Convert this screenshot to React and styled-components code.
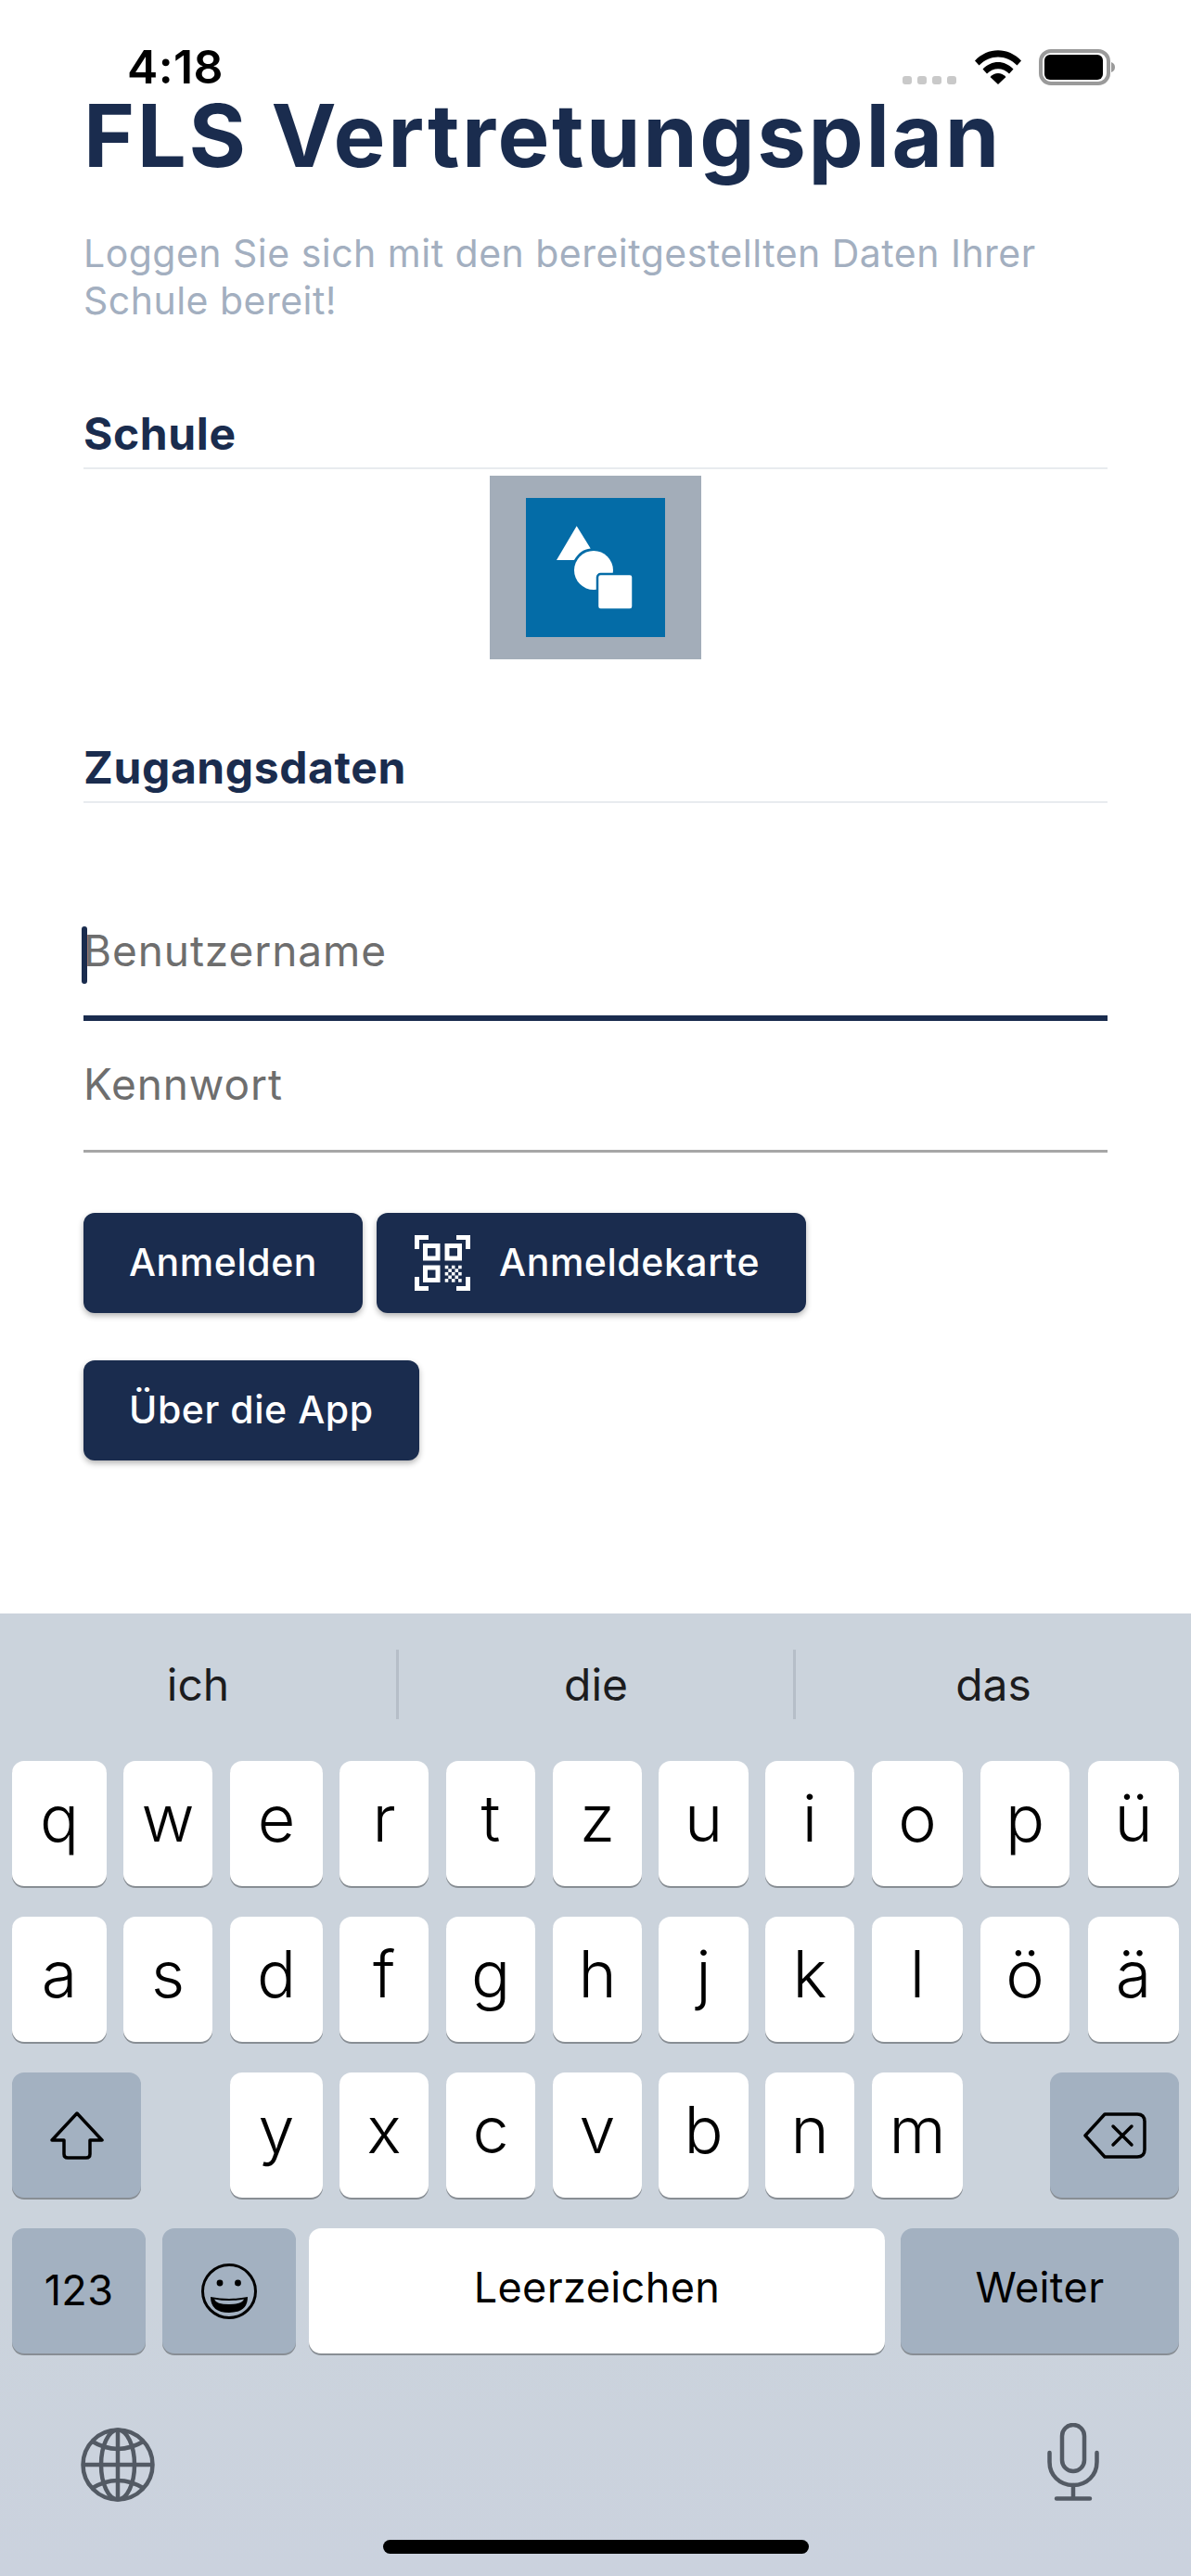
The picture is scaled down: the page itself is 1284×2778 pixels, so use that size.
import React from "react";
import styled, { createGlobalStyle } from "styled-components";

const Global = createGlobalStyle`
  html, body { margin: 0; padding: 0; background: #fff; }
  * { box-sizing: border-box; }
  #root { font-family: Inter, "Noto Sans", sans-serif; }
`;

const Phone = styled.div`
  width: 1284px;
  height: 2778px;
  display: flex;
  flex-direction: column;
  background: #fff;
  overflow: hidden;
`;

const StatusBar = styled.div`
  height: 96px;
  padding: 53px 82px 0 137px;
  display: flex;
  justify-content: space-between;
  align-items: flex-start;
`;
const Time = styled.div`
  font-size: 50px;
  line-height: 39px;
  font-weight: 600;
  color: #000;
  letter-spacing: 0.4px;
`;
const StatusIcons = styled.div`
  display: flex;
  align-items: flex-start;
`;
const SignalDots = styled.div`
  display: flex;
  gap: 6px;
  margin: 29px 20px 0 0;
`;
const Dot = styled.span`
  width: 10px;
  height: 9px;
  border-radius: 3px;
  background: #c9c9c9;
`;
const WifiSvg = styled.svg`
  width: 50px;
  height: 37px;
  margin: 1px 19px 0 0;
`;
const BatterySvg = styled.svg`
  width: 82px;
  height: 39px;
`;

const Content = styled.div`
  padding: 0 90px;
`;
const Title = styled.h1`
  margin: 0;
  font-size: 94px;
  line-height: 100px;
  font-weight: 700;
  color: #1a2c4e;
  letter-spacing: 2.6px;
  white-space: nowrap;
`;
const Subtitle = styled.p`
  margin: 52px 0 0;
  font-size: 41px;
  line-height: 51px;
  letter-spacing: 0.48px;
  color: #a3afc0;
`;
const SectionHead = styled.div`
  margin-top: ${(p) => p.$top}px;
  padding-bottom: 9px;
  border-bottom: 2px solid #e8ebef;
  font-size: 48px;
  line-height: 54px;
  font-weight: 700;
  letter-spacing: 0.6px;
  color: #1a2c4e;
`;
const LogoWrap = styled.div`
  width: 228px;
  height: 198px;
  margin: 7px auto 0;
  background: #a3adb9;
  display: flex;
  align-items: center;
  justify-content: center;
`;
const LogoSvg = styled.svg`
  width: 150px;
  height: 150px;
  display: block;
`;
const Field = styled.div`
  position: relative;
  margin-top: ${(p) => p.$top}px;
  height: ${(p) => p.$h}px;
  display: flex;
  align-items: flex-end;
  padding-bottom: ${(p) => p.$pad}px;
  border-bottom: ${(p) => (p.$focus ? "6px solid #1a2c4e" : "3px solid #a6a6a6")};
  font-size: 46px;
  line-height: 54px;
  letter-spacing: 0.9px;
  color: #6e6e6e;
`;
const Caret = styled.span`
  position: absolute;
  left: -2px;
  top: 41px;
  width: 6px;
  height: 62px;
  border-radius: 3px;
  background: #1a2c4e;
`;
const ButtonRow = styled.div`
  display: flex;
  gap: 15px;
  margin-top: ${(p) => p.$top}px;
`;
const Button = styled.div`
  height: 108px;
  padding: 0 49px 2px;
  display: flex;
  align-items: center;
  gap: 31px;
  border-radius: 12px;
  background: #1a2c4e;
  color: #fff;
  font-size: 41px;
  font-weight: 500;
  letter-spacing: 0.55px;
  box-shadow: 0 3px 6px rgba(0, 0, 0, 0.3);
  white-space: nowrap;
`;
const IconButton = styled(Button)`
  padding: 0 50px 2px 41px;
`;
const QrSvg = styled.svg`
  width: 60px;
  height: 60px;
  flex: none;
  margin-top: 2px;
`;

const Keyboard = styled.div`
  margin-top: auto;
  height: 1038px;
  background: linear-gradient(180deg, #cbd3dc 0%, #cbd3dc 70%, #cbd2de 100%);
  display: flex;
  flex-direction: column;
`;
const Suggestions = styled.div`
  height: 159px;
  padding-top: 39px;
  display: grid;
  grid-template-columns: 427px 428px 429px;
`;
const Suggestion = styled.div`
  height: 75px;
  display: flex;
  align-items: center;
  justify-content: center;
  font-size: 48px;
  color: #1c1c1e;
  border-left: ${(p) => (p.$first ? "none" : "3px solid #b6bec8")};
`;
const KeyRow = styled.div`
  display: flex;
  height: 135px;
  margin-bottom: 33px;
`;
const Key = styled.div`
  flex: none;
  width: ${(p) => p.$w}px;
  margin-left: ${(p) => p.$gap}px;
  height: 135px;
  border-radius: 13px;
  background: ${(p) => (p.$dark ? "#a3b1c1" : "#fff")};
  box-shadow: 0 2px 0 #888e94;
  display: flex;
  align-items: center;
  justify-content: center;
  padding-bottom: ${(p) => p.$pad}px;
  color: #000;
  font-size: ${(p) => (p.$small ? 45 : 70)}px;
  font-weight: ${(p) => (p.$small ? 400 : 300)};
  letter-spacing: ${(p) => (p.$small ? 0.4 : 0)}px;
`;
const BottomBar = styled.div`
  margin-top: 42px;
  height: 84px;
  padding: 0 99px 0 87px;
  display: flex;
  justify-content: space-between;
  align-items: flex-start;
`;
const GlobeSvg = styled.svg`
  width: 80px;
  height: 80px;
  margin-top: 5px;
`;
const MicSvg = styled.svg`
  width: 56px;
  height: 84px;
`;
const HomeBar = styled.div`
  width: 459px;
  height: 15px;
  margin: 42px auto 0;
  border-radius: 8px;
  background: #000;
`;

const Wifi = () => (
  <WifiSvg viewBox="0 0 50 37">
    <path d="M0 11.5 C14-3.5 36-3.5 50 11.5 L45.5 16.5 C33.5 4.5 16.5 4.5 4.5 16.5Z" fill="#000" />
    <path d="M8.5 20.5 C18 10.5 32 10.5 41.5 20.5 L37 25.5 C30 18.5 20 18.5 13 25.5Z" fill="#000" />
    <path d="M16.5 29 C21.5 23.5 28.5 23.5 33.5 29 L25 37Z" fill="#000" />
  </WifiSvg>
);
const Battery = () => (
  <BatterySvg viewBox="0 0 82 39">
    <rect x="2" y="2" width="73" height="35" rx="11" fill="none" stroke="#9a9a9a" strokeWidth="4" />
    <rect x="6" y="6" width="63" height="27" rx="6" fill="#000" />
    <path d="M78 14 C81 15 82 17 82 19.5 C82 22 81 24 78 25Z" fill="#9a9a9a" />
  </BatterySvg>
);
const Logo = () => (
  <LogoSvg viewBox="0 0 150 150">
    <rect width="150" height="150" fill="#046ca7" />
    <path d="M54.7 30.3 L69.7 54.5 C62 55 56 60 52 67 L33 67Z" fill="#fff" />
    <circle cx="73" cy="78" r="21" fill="#fff" />
    <rect x="77" y="82" width="38.5" height="38.5" rx="3.5" fill="#fff" stroke="#046ca7" strokeWidth="2.5" />
  </LogoSvg>
);
const checker = [];
for (let r = 0; r < 5; r += 1) {
  for (let c = 0; c < 5; c += 1) {
    if ((r + c) % 2 === 0) checker.push([c, r]);
  }
}
const Qr = () => (
  <QrSvg viewBox="0 0 60 60">
    <g fill="none" stroke="#fff" strokeWidth="5">
      <path d="M15 2.5 H2.5 V15" />
      <path d="M45 2.5 H57.5 V15" />
      <path d="M2.5 45 V57.5 H15" />
      <path d="M57.5 45 V57.5 H45" />
      <rect x="11.5" y="11.5" width="13.5" height="13.5" />
      <rect x="35" y="11.5" width="13.5" height="13.5" />
      <rect x="11.5" y="35" width="13.5" height="13.5" />
    </g>
    <g fill="#fff">
      {checker.map(([c, r]) => (
        <rect key={`${c}-${r}`} x={32.7 + c * 3.6} y={32.7 + r * 3.6} width="3.6" height="3.6" />
      ))}
    </g>
  </QrSvg>
);
const ShiftIcon = () => (
  <svg width="58" height="52" viewBox="0 0 58 52" fill="none" stroke="#000" strokeWidth="3.5" strokeLinejoin="round">
    <path d="M29 2 L56 31 H43 V46 Q43 50 39 50 H19 Q15 50 15 46 V31 H2Z" />
  </svg>
);
const BackspaceIcon = () => (
  <svg width="68" height="50" viewBox="0 0 68 50" fill="none" stroke="#000" strokeWidth="3.5" strokeLinejoin="round" strokeLinecap="round">
    <path d="M23 2 H58 Q66 2 66 10 V40 Q66 48 58 48 H23 L2 25Z" />
    <path d="M32 15 L52 35 M52 15 L32 35" />
  </svg>
);
const EmojiIcon = () => (
  <svg width="60" height="60" viewBox="0 0 60 60">
    <circle cx="30" cy="30" r="28.5" fill="none" stroke="#000" strokeWidth="3" />
    <circle cx="20" cy="21" r="3.4" fill="#000" />
    <circle cx="39.5" cy="21" r="3.4" fill="#000" />
    <path d="M10 36 Q30 40 50 36 Q50 53 30 53 Q10 53 10 36Z" fill="#000" />
    <path d="M14 38.5 Q30 41.5 46 38.5 Q44 44 30 44 Q16 44 14 38.5Z" fill="#a3b1c1" />
  </svg>
);
const Globe = () => (
  <GlobeSvg viewBox="0 0 80 80" fill="none" stroke="#535a64" strokeWidth="4.5">
    <ellipse cx="40" cy="40" rx="37.5" ry="37.5" />
    <ellipse cx="40" cy="40" rx="18" ry="37.5" />
    <path d="M40 2 V78 M2 40 H78" />
    <path d="M11 14 Q40 32 69 14" />
    <path d="M11 66 Q40 48 69 66" />
  </GlobeSvg>
);
const Mic = () => (
  <MicSvg viewBox="0 0 56 84" fill="none" stroke="#535a64" strokeWidth="4.5" strokeLinecap="round">
    <rect x="16" y="2" width="24" height="50" rx="12" />
    <path d="M2.5 32 V42 C2.5 56 13 67 28 67 C43 67 53.5 56 53.5 42 V32" />
    <path d="M28 67 V81 M10 81.5 H46" />
  </MicSvg>
);

const toKeys = (items) => {
  let prev = 0;
  return items.map((k) => {
    const key = { ...k, gap: k.x - prev, w: k.end - k.x };
    prev = k.end;
    return key;
  });
};
const slots = [
  [13, 115], [133, 229], [248, 348], [366, 462], [481, 577], [596, 692],
  [710, 807], [825, 921], [940, 1038], [1057, 1153], [1173, 1271],
];
const fromSlots = (letters) =>
  toKeys(letters.split("").map((l, i) => ({ label: l, x: slots[i][0], end: slots[i][1], pad: 12 })));

const row1 = fromSlots("qwertzuiopü");
const row2 = fromSlots("asdfghjklöä");
const row3 = toKeys([
  { label: <ShiftIcon />, x: 13, end: 152, dark: true, pad: 0 },
  ...["y", "x", "c", "v", "b", "n", "m"].map((l, i) => ({ label: l, x: slots[i + 2][0], end: slots[i + 2][1], pad: 12 })),
  { label: <BackspaceIcon />, x: 1132, end: 1271, dark: true, pad: 0 },
]);
const row4 = toKeys([
  { label: "123", x: 13, end: 157, dark: true, small: true, pad: 2 },
  { label: <EmojiIcon />, x: 175, end: 319, dark: true, small: true, pad: 0 },
  { label: "Leerzeichen", x: 333, end: 954, small: true, pad: 8 },
  { label: "Weiter", x: 971, end: 1271, dark: true, small: true, pad: 8 },
]);

const Row = ({ keys }) => (
  <KeyRow>
    {keys.map((k, i) => (
      <Key key={i} $w={k.w} $gap={k.gap} $dark={k.dark} $small={k.small} $pad={k.pad}>
        {k.label}
      </Key>
    ))}
  </KeyRow>
);

export default function App() {
  return (
    <Phone>
      <Global />
      <StatusBar>
        <Time>4:18</Time>
        <StatusIcons>
          <SignalDots>
            <Dot /><Dot /><Dot /><Dot />
          </SignalDots>
          <Wifi />
          <Battery />
        </StatusIcons>
      </StatusBar>
      <Content>
        <Title>FLS Vertretungsplan</Title>
        <Subtitle>
          Loggen Sie sich mit den bereitgestellten Daten Ihrer
          <br />
          Schule bereit!
        </Subtitle>
        <SectionHead $top={91}>Schule</SectionHead>
        <LogoWrap>
          <Logo />
        </LogoWrap>
        <SectionHead $top={90}>Zugangsdaten</SectionHead>
        <Field $top={92} $h={143} $pad={43} $focus>
          <Caret />
          Benutzername
        </Field>
        <Field $top={0} $h={142} $pad={44}>
          Kennwort
        </Field>
        <ButtonRow $top={65}>
          <Button>Anmelden</Button>
          <IconButton>
            <Qr />
            Anmeldekarte
          </IconButton>
        </ButtonRow>
        <ButtonRow $top={51}>
          <Button>Über die App</Button>
        </ButtonRow>
      </Content>
      <Keyboard>
        <Suggestions>
          <Suggestion $first>ich</Suggestion>
          <Suggestion>die</Suggestion>
          <Suggestion>das</Suggestion>
        </Suggestions>
        <Row keys={row1} />
        <Row keys={row2} />
        <Row keys={row3} />
        <Row keys={row4} />
        <BottomBar>
          <Globe />
          <Mic />
        </BottomBar>
        <HomeBar />
      </Keyboard>
    </Phone>
  );
}
